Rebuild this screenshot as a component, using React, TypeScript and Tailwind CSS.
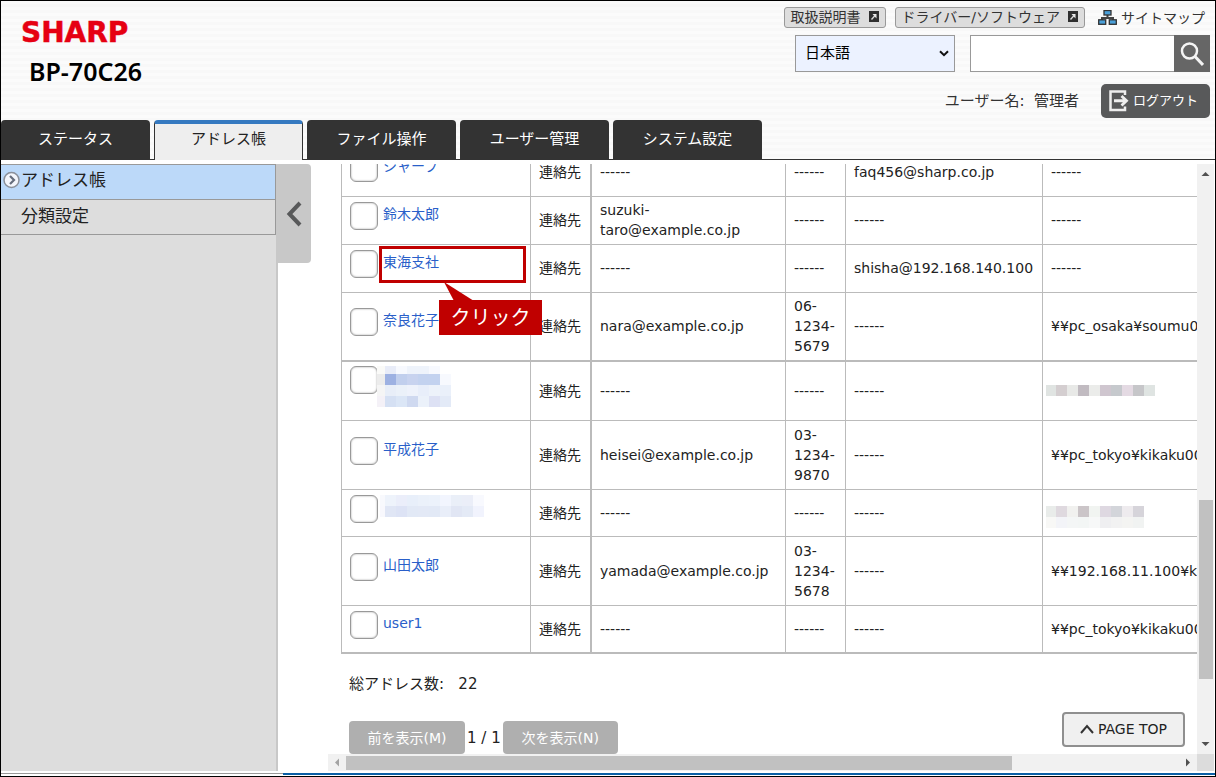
import type { ReactNode } from 'react'

const tabs = ['ステータス', 'アドレス帳', 'ファイル操作', 'ユーザー管理', 'システム設定']

const EMPTY = '------'

type Mask = { first: number; firstRow: number; rows: string[][] }

type Row = {
  name?: string
  nameMask?: Mask
  email: string
  fax: string
  direct: string
  folder?: string
  folderMask?: Mask
  size: string
  line?: string
  callout?: boolean
}

const rows: Row[] = [
  { name: 'シャープ', email: EMPTY, fax: EMPTY, direct: 'faq456@sharp.co.jp', folder: EMPTY, size: 'h-12' },
  { name: '鈴木太郎', email: 'suzuki-taro@example.co.jp', fax: EMPTY, direct: EMPTY, folder: EMPTY, size: 'h-12' },
  { name: '東海支社', email: EMPTY, fax: EMPTY, direct: 'shisha@192.168.140.100', folder: EMPTY, size: 'h-12', callout: true },
  { name: '奈良花子', email: 'nara@example.co.jp', fax: '06-1234-5679', direct: EMPTY, folder: '¥¥pc_osaka¥soumu001', size: 'h-[69px]', line: 'border-b-2' },
  {
    nameMask: {
      first: 8,
      firstRow: 8,
      rows: [
        ['#fafaf8', '#e8ecf8', '#f7f9fe', '#eef3fb', '#eef3fb', '#f7f9fe', '#ffffff'],
        ['#ececec', '#9db1e2', '#c1cfed', '#c8d3ef', '#c3d2ef', '#c3d2ef', '#f7f9fe'],
        ['#f5f5f5', '#e8eef8', '#ebf1f9', '#eef2fb', '#e8eefa', '#edf2fa', '#eaf0fa'],
        ['#f4f1f7', '#d5e0f3', '#dbe6f6', '#cfd9f0', '#ebf1fa', '#dde1f4', '#e3eaf7'],
      ],
    },
    email: EMPTY,
    fax: EMPTY,
    direct: EMPTY,
    folderMask: {
      first: 10,
      firstRow: 11,
      rows: [['#e0e4e2', '#d4ced0', '#e8e9e7', '#c1bbc1', '#ebecea', '#cfc6cf', '#c6c9cd', '#e4dae3', '#c6c6c9', '#dfe4e2']],
    },
    size: 'h-[59px]',
  },
  { name: '平成花子', email: 'heisei@example.co.jp', fax: '03-1234-9870', direct: EMPTY, folder: '¥¥pc_tokyo¥kikaku001', size: 'h-[69px]' },
  {
    nameMask: {
      first: 5,
      firstRow: 11,
      rows: [
        ['#f8f9fd', '#eef3fb', '#ebeefa', '#e8effa', '#ebf1fa', '#ecf2fb', '#f2f5fe', '#eaeff8', '#ebeef8', '#f8f9fe'],
        ['#f8f8fd', '#e0e6f5', '#dde3f5', '#e2e9f6', '#e3e9f6', '#e2e9f6', '#e9eef9', '#e1e6f4', '#e4eaf6', '#f1f3fd'],
      ],
    },
    email: EMPTY,
    fax: EMPTY,
    direct: EMPTY,
    folderMask: {
      first: 10,
      firstRow: 11,
      rows: [
        ['#e9ecea', '#dfd9df', '#f1f1ef', '#cbc5c8', '#f1f4f1', '#ded8e1', '#d3d5da', '#eeebee', '#d6d4da'],
        ['#f8f8f6', '#f3f4f8', '#f4f6f6', '#f3f6f5', '#f7f8f8', '#efeff1', '#f2f2f2', '#f4f4f2', '#f1f3f2'],
      ],
    },
    size: 'h-[47px]',
  },
  { name: '山田太郎', email: 'yamada@example.co.jp', fax: '03-1234-5678', direct: EMPTY, folder: '¥¥192.168.11.100¥kikaku', size: 'h-[69px]' },
  { name: 'user1', email: EMPTY, fax: EMPTY, direct: EMPTY, folder: '¥¥pc_tokyo¥kikaku002', size: 'h-12', line: 'border-b-2' },
]

// Pixelated block drawn in place of private text
function Mosaic({ mask, className }: { mask: Mask; className: string }) {
  const width = mask.first + (mask.rows[0].length - 1) * 11
  const height = mask.firstRow + (mask.rows.length - 1) * 11
  return (
    <svg width={width} height={height} className={className} shapeRendering="crispEdges" aria-hidden="true">
      {mask.rows.map((colors, r) =>
        colors.map((color, c) => (
          <rect
            key={`${r}-${c}`}
            x={c === 0 ? 0 : mask.first + (c - 1) * 11}
            y={r === 0 ? 0 : mask.firstRow + (r - 1) * 11}
            width={c === 0 ? mask.first : 11}
            height={r === 0 ? mask.firstRow : 11}
            fill={color}
          />
        ))
      )}
    </svg>
  )
}

function ExternalIcon() {
  return (
    <svg width="10" height="11" viewBox="0 0 10 11" aria-hidden="true">
      <rect width="10" height="11" fill="#2f2f2f" />
      <path d="M3.500 3h4v4.500z" fill="#eee" />
      <path d="M6.500 4L2.500 8.500" stroke="#ddd" strokeWidth="1.300" fill="none" />
    </svg>
  )
}

function SitemapIcon() {
  return (
    <svg width="19" height="15" viewBox="0 0 19 15" aria-hidden="true">
      <path d="M9.500 5v3M4 11V8h11v3" stroke="#444" strokeWidth="2" fill="none" />
      <rect x="6" y="0.500" width="7" height="4.500" fill="#4a9fd8" stroke="#333" strokeWidth="1.300" />
      <rect x="0.700" y="9.800" width="7" height="4.500" fill="#4a9fd8" stroke="#333" strokeWidth="1.300" />
      <rect x="11.300" y="9.800" width="7" height="4.500" fill="#4a9fd8" stroke="#333" strokeWidth="1.300" />
    </svg>
  )
}

function ManualLink({ children }: { children: ReactNode }) {
  return (
    <a href="#" className="flex h-[21px] items-center gap-2 rounded-[3px] border border-[#999] bg-[#ddd] px-[6px] pb-0.5 text-sm leading-5 text-[#333]">
      {children}
      <ExternalIcon />
    </a>
  )
}

function Header() {
  return (
    <header className="flex h-[159px] shrink-0 flex-col justify-between border-b border-[#333] bg-[repeating-linear-gradient(180deg,#fbfbfb_0px,#fbfbfb_3px,#f8f8f8_3px,#f8f8f8_6px)]">
      <div className="flex justify-between pr-[5px]">
        <div className="pl-5 pt-[14px]">
          <svg width="128" height="36" role="img" aria-label="SHARP">
            <text x="0" y="27" fill="#e60012" stroke="#e60012" strokeWidth="0.5" className="font-['DejaVu_Sans'] text-[28px] font-bold">
              SHARP
            </text>
          </svg>
          <h1 className="pl-2 font-['Noto_Sans'] text-[25px] font-semibold leading-10 text-black">BP-70C26</h1>
        </div>

        <div className="flex flex-col items-end pt-[6px]">
          <div className="flex items-center gap-[9px]">
            <ManualLink>取扱説明書</ManualLink>
            <ManualLink>ドライバー/ソフトウェア</ManualLink>
            <a href="#" className="ml-1 flex items-center gap-1 pr-[5px] text-sm leading-5 text-[#333]">
              <SitemapIcon />
              サイトマップ
            </a>
          </div>

          <div className="mt-[7px] flex gap-[15px]">
            <div className="relative">
              <select aria-label="言語" className="h-[37px] w-40 appearance-none border border-[#999] bg-[#ecf2ff] pl-[9px] text-[15px] text-black">
                <option>日本語</option>
              </select>
              <svg width="10" height="7" viewBox="0 0 10 7" className="pointer-events-none absolute right-[6px] top-[15px]" aria-hidden="true">
                <path d="M1 1.200l4 4 4-4" stroke="#111" strokeWidth="2" fill="none" />
              </svg>
            </div>
            <form className="flex">
              <input type="text" aria-label="検索" className="h-[37px] w-[204px] border border-r-0 border-[#999] bg-white px-2 text-[15px]" />
              <button type="button" aria-label="検索する" className="flex h-[37px] w-9 items-center justify-center bg-[#666]">
                <svg width="24" height="26" viewBox="0 0 24 26" fill="none" stroke="#f4f4f4" aria-hidden="true">
                  <circle cx="9.500" cy="10" r="7.500" strokeWidth="2.500" />
                  <path d="M15 15.500l8 8.500" strokeWidth="3" />
                </svg>
              </button>
            </form>
          </div>

          <div className="mt-3 flex items-center gap-[22px]">
            <span className="text-[15px] text-[#333]">ユーザー名:&nbsp; 管理者</span>
            <button type="button" className="flex h-[34px] w-[109px] items-center gap-1 rounded-[5px] bg-[#58595a] pl-2 text-[13px] text-white">
              <svg width="20" height="22" viewBox="0 0 20 22" fill="none" stroke="#eee" aria-hidden="true">
                <path d="M16 5V1.500H1.500v18.500H16v-3.500" strokeWidth="2.500" />
                <path d="M5 10.750h12M12.500 6l5 4.750-5 4.750" strokeWidth="2.800" />
              </svg>
              ログアウト
            </button>
          </div>
        </div>
      </div>

      <nav className="flex gap-1">
        {tabs.map((tab, i) => (
          <a
            key={tab}
            href="#"
            aria-current={i === 1 ? 'page' : undefined}
            className={
              i === 1
                ? '-mb-px flex h-10 w-[149px] items-center justify-center rounded-t-[4px] border-x border-t-4 border-x-[#333] border-t-[#3579c0] bg-[#eee] pb-[5px] text-[15px] text-[#222]'
                : 'flex h-[39px] w-[149px] items-center justify-center rounded-t-[4px] bg-[#333] text-[15px] text-white'
            }
          >
            {tab}
          </a>
        ))}
      </nav>
    </header>
  )
}

function Sidebar() {
  return (
    <aside className="w-[277px] shrink-0 border-r-2 border-[#c8c8c8] bg-[#ddd]">
      <ul className="text-[17px] leading-8 text-[#222]">
        <li className="h-9 border-y border-r border-[#999] bg-[#bcd9f9]">
          <a href="#" className="flex items-center gap-px pl-0.5 leading-[30px]">
            <svg width="17" height="18" viewBox="0 0 17 18" aria-hidden="true">
              <circle cx="8.500" cy="9" r="7.500" fill="#f4f6fc" stroke="#8a8f99" strokeWidth="1.500" />
              <path d="M7 5l4 4-4 4" stroke="#666d7c" strokeWidth="2.200" fill="none" />
            </svg>
            アドレス帳
          </a>
        </li>
        <li className="h-[35px] border-b border-r border-[#999] pl-5">
          <a href="#">分類設定</a>
        </li>
      </ul>
    </aside>
  )
}

function Callout() {
  return (
    <div className="pointer-events-none absolute left-[37px] top-px z-10">
      <div className="h-[37px] w-[147px] border-[3px] border-[#c00000]" />
      <svg width="40" height="19" viewBox="0 0 40 19" className="absolute left-[60px] top-9" aria-hidden="true">
        <path d="M5 0L15 19h20z" fill="#c00000" />
      </svg>
      <div className="absolute left-[60px] top-[54px] flex h-[35px] w-[103px] items-center justify-center bg-[#c00000] text-xl text-white">
        クリック
      </div>
    </div>
  )
}

function AddressTable() {
  return (
    <table className="-mt-[15px] w-[1120px] table-fixed border-separate border-spacing-0 border-l border-[#bbb] text-sm leading-5 text-[#222]">
      <colgroup>
        <col className="w-[189px]" />
        <col className="w-[61px]" />
        <col className="w-[194px]" />
        <col className="w-[60px]" />
        <col className="w-[197px]" />
        <col />
      </colgroup>
      <tbody className="[&_td]:border-r [&_td]:border-[#bbb] [&_td]:pb-px [&_td]:pl-2">
        {rows.map((row, i) => {
          const line = row.line ?? 'border-b'
          return (
            <tr key={i} className={row.size}>
              <td className={`relative ${line}`}>
                <div className={row.nameMask && row.nameMask.rows.length > 2 ? 'flex h-[50px] items-start gap-[5px]' : 'flex h-9 items-start gap-[5px]'}>
                  <input
                    type="checkbox"
                    aria-label={row.name ?? '連絡先'}
                    className="size-7 shrink-0 appearance-none rounded-[6px] border border-[#999] bg-white shadow-[inset_0_0_2px_#999]"
                  />
                  {row.name && (
                    <a href="#" className="leading-6 text-[#2a5fc9]">
                      {row.name}
                    </a>
                  )}
                  {row.nameMask && <Mosaic mask={row.nameMask} className={row.nameMask.rows.length > 2 ? 'relative -ml-1.5' : '-ml-[3px]'} />}
                </div>
                {row.callout && <Callout />}
              </td>
              <td className={`${line} !border-r-2`}>連絡先</td>
              <td className={line}>{row.email}</td>
              <td className={line}>{row.fax}</td>
              <td className={line}>{row.direct}</td>
              <td className={`${line} whitespace-nowrap`}>
                {row.folder}
                {row.folderMask && <Mosaic mask={row.folderMask} className={row.folderMask.rows.length > 1 ? '-ml-[5px] mt-2' : '-ml-[5px]'} />}
              </td>
            </tr>
          )
        })}
      </tbody>
    </table>
  )
}

function VerticalScrollbar() {
  return (
    <div className="flex w-[17px] shrink-0 flex-col items-center bg-[#f1f1f1]" aria-hidden="true">
      <svg width="17" height="17">
        <path d="M4.500 12l4-4 4 4z" fill="#505050" />
      </svg>
      <div className="grow-[319]" />
      <div className="w-[14px] grow-[179] bg-[#c1c1c1]" />
      <div className="grow-[58]" />
      <svg width="17" height="17">
        <path d="M4.500 5l4 4 4-4z" fill="#505050" />
      </svg>
    </div>
  )
}

function HorizontalScrollbar() {
  return (
    <div className="flex h-[17px] shrink-0 items-center bg-[#f1f1f1]" aria-hidden="true">
      <svg width="18" height="17">
        <path d="M11 4.500l-4 4 4 4z" fill="#a3a3a3" />
      </svg>
      <div className="h-[14px] grow-[666] bg-[#c1c1c1]" />
      <div className="grow-[168]" />
      <svg width="17" height="17">
        <path d="M6 4.500l4 4-4 4z" fill="#505050" />
      </svg>
      <div className="h-full w-[17px] bg-[#dcdcdc]" />
    </div>
  )
}

export default function App() {
  return (
    <div className="flex h-screen flex-col overflow-hidden border border-black bg-white font-['DejaVu_Sans','Noto_Sans_CJK_JP',sans-serif]">
      <Header />
      <div className="flex min-h-0 grow pt-1">
        <Sidebar />
        <button type="button" aria-label="メニューを閉じる" className="-ml-0.5 flex h-[99px] w-[35px] shrink-0 items-center justify-center rounded-r-[4px] bg-[#c8c8c8]">
          <svg width="16" height="26" viewBox="0 0 16 26" fill="none" aria-hidden="true">
            <path d="M14 2L3.500 13 14 24" stroke="#58595a" strokeWidth="4" />
          </svg>
        </button>

        <div className="flex min-w-0 grow flex-col pl-[17px] pr-px">
          <div className="relative flex min-h-0 grow">
            <main className="min-w-0 grow overflow-hidden pl-[13px]">
              <AddressTable />
              <div className="pl-2 text-[15px] leading-5 text-[#222]">
                <p className="mt-5">総アドレス数:&nbsp;&nbsp; 22</p>
                <div className="mt-[27px] flex items-center">
                  <button type="button" className="h-[33px] w-[116px] rounded-[4px] bg-[#afafaf] text-sm text-white">
                    前を表示(M)
                  </button>
                  <span className="px-0.5">1 / 1</span>
                  <button type="button" className="h-[33px] w-[115px] rounded-[4px] bg-[#afafaf] text-sm text-white">
                    次を表示(N)
                  </button>
                </div>
              </div>
            </main>
            <button
              type="button"
              className="absolute bottom-[7px] right-[29px] flex h-[35px] w-[123px] items-center justify-center gap-1 rounded-[4px] border-2 border-[#8f8f8f] bg-[#f0f0f0] pb-0.5 text-sm text-[#222]"
            >
              <svg width="14" height="10" viewBox="0 0 14 10" fill="none" aria-hidden="true">
                <path d="M1 9l6-7 6 7" stroke="#333" strokeWidth="2" />
              </svg>
              PAGE TOP
            </button>
            <VerticalScrollbar />
          </div>
          <HorizontalScrollbar />
        </div>
      </div>
      <footer className="flex h-[5px] shrink-0 items-center bg-white">
        <div className="h-px w-[282px] bg-[#999]" />
        <div className="h-0.5 grow bg-[#0a5fa5]" />
      </footer>
    </div>
  )
}
